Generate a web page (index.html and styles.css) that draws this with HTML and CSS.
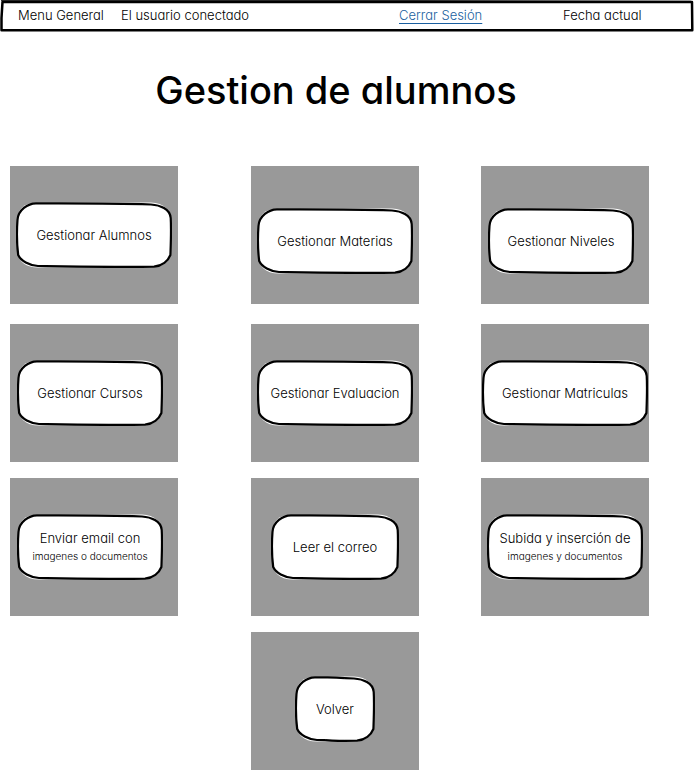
FILE: index.html
```html
<!DOCTYPE html>
<html lang="es">
<head>
<meta charset="utf-8">
<meta name="viewport" content="width=device-width, initial-scale=1">
<title>Gestion de alumnos</title>
<link rel="stylesheet" href="styles.css">
</head>
<body>
<svg class="defs" aria-hidden="true">
  <symbol id="cap-left" viewBox="0 0 30 66">
    <path class="fill" d="M30 .5H22C8 .5 1 7 1 20V46C1 58 8 65.500 22 65.500H30Z"/>
    <path class="line" d="M30 1.300H20C12 1.400 2 8 1.500 18C.6 30 .8 42 2.200 53C5 59 13 63.500 22 64L30 64.200"/>
  </symbol>
  <symbol id="cap-mid" viewBox="0 0 100 66" preserveAspectRatio="none">
    <path class="fill" d="M0 .5H100V65.500H0Z"/>
    <path class="line" d="M0 1.300C40 1.200 70 1.500 100 2.200M0 64.200C30 64.800 60 65.100 100 64.800"/>
  </symbol>
  <symbol id="cap-right" viewBox="0 0 30 66">
    <path class="fill" d="M0 .5H9C22 1 29 8 29 20V46C29 58 22 65.500 9 65.500H0Z"/>
    <path class="line" d="M0 2.200L9 2.500C18 3 28 7 28.700 16C29.400 28 28.800 42 28.400 53C26 59 20 64 12 64.700L0 64.800"/>
  </symbol>
</svg>

<header class="topbar">
  <svg class="topbar-frame" viewBox="0 0 694 32" preserveAspectRatio="none" aria-hidden="true">
    <defs>
      <linearGradient id="fade"><stop offset="0" stop-color="#333"/><stop offset=".6" stop-color="#333"/><stop offset="1" stop-color="#ccc"/></linearGradient>
    </defs>
    <rect x="1" y="0" width="690" height="1" fill="url(#fade)"/>
    <path class="line frame" d="M2.500 1.900H400L692 2L692.300 30.200H1.500L1.500 18Z"/>
  </svg>
  <span>Menu General</span>
  <span>El usuario conectado</span>
  <a href="#">Cerrar Sesión</a>
  <span>Fecha actual</span>
</header>

<main>
  <h1>Gestion de alumnos</h1>
  <div class="cards">
    <div class="card"><button class="btn wide" type="button"><span class="outline" aria-hidden="true"><svg class="cap"><use href="#cap-left"/></svg><svg class="mid"><use href="#cap-mid"/></svg><svg class="cap"><use href="#cap-right"/></svg></span><span class="label">Gestionar Alumnos</span></button></div>
    <div class="card low"><button class="btn wide" type="button"><span class="outline" aria-hidden="true"><svg class="cap"><use href="#cap-left"/></svg><svg class="mid"><use href="#cap-mid"/></svg><svg class="cap"><use href="#cap-right"/></svg></span><span class="label">Gestionar Materias</span></button></div>
    <div class="card low start"><button class="btn regular" type="button"><span class="outline" aria-hidden="true"><svg class="cap"><use href="#cap-left"/></svg><svg class="mid"><use href="#cap-mid"/></svg><svg class="cap"><use href="#cap-right"/></svg></span><span class="label">Gestionar Niveles</span></button></div>

    <div class="card start"><button class="btn regular" type="button"><span class="outline" aria-hidden="true"><svg class="cap"><use href="#cap-left"/></svg><svg class="mid"><use href="#cap-mid"/></svg><svg class="cap"><use href="#cap-right"/></svg></span><span class="label">Gestionar Cursos</span></button></div>
    <div class="card"><button class="btn wide" type="button"><span class="outline" aria-hidden="true"><svg class="cap"><use href="#cap-left"/></svg><svg class="mid"><use href="#cap-mid"/></svg><svg class="cap"><use href="#cap-right"/></svg></span><span class="label">Gestionar Evaluacion</span></button></div>
    <div class="card"><button class="btn full" type="button"><span class="outline" aria-hidden="true"><svg class="cap"><use href="#cap-left"/></svg><svg class="mid"><use href="#cap-mid"/></svg><svg class="cap"><use href="#cap-right"/></svg></span><span class="label">Gestionar Matriculas</span></button></div>

    <div class="card start"><button class="btn regular" type="button"><span class="outline" aria-hidden="true"><svg class="cap"><use href="#cap-left"/></svg><svg class="mid"><use href="#cap-mid"/></svg><svg class="cap"><use href="#cap-right"/></svg></span><span class="label">Enviar email con<small>imagenes o documentos</small></span></button></div>
    <div class="card"><button class="btn medium" type="button"><span class="outline" aria-hidden="true"><svg class="cap"><use href="#cap-left"/></svg><svg class="mid"><use href="#cap-mid"/></svg><svg class="cap"><use href="#cap-right"/></svg></span><span class="label">Leer el correo</span></button></div>
    <div class="card"><button class="btn wide" type="button"><span class="outline" aria-hidden="true"><svg class="cap"><use href="#cap-left"/></svg><svg class="mid"><use href="#cap-mid"/></svg><svg class="cap"><use href="#cap-right"/></svg></span><span class="label">Subida y inserción de<small>imagenes y documentos</small></span></button></div>

    <div class="card back"><button class="btn short" type="button"><span class="outline" aria-hidden="true"><svg class="cap"><use href="#cap-left"/></svg><svg class="mid"><use href="#cap-mid"/></svg><svg class="cap"><use href="#cap-right"/></svg></span><span class="label">Volver</span></button></div>
  </div>
</main>
</body>
</html>
```
FILE: styles.css
```css
* { box-sizing: border-box; }

body {
  margin: 0;
  background: #fff;
  color: #000;
  font-family: Inter, "Liberation Sans", sans-serif;
  font-size: 13px;
  font-weight: 300;
  line-height: 18px;
  /* single-storey "a" */
  font-feature-settings: "cv11";
}

.defs { position: absolute; width: 0; height: 0; }

.fill { fill: #fff; }
.line {
  fill: none;
  stroke: #000;
  stroke-width: 2.2;
  stroke-linejoin: round;
  vector-effect: non-scaling-stroke;
}
.frame { stroke-width: 2.5; }

.topbar {
  position: relative;
  display: grid;
  grid-template-columns: 103fr 278fr 164fr 131fr;
  align-items: center;
  height: 32px;
  padding: 0 0 2px 18px;
  white-space: nowrap;
}
.topbar-frame {
  position: absolute;
  inset: 0;
  width: 100%;
  height: 100%;
  pointer-events: none;
}
.topbar a {
  color: #1a5fa0;
  text-underline-offset: 3px;
}

h1 {
  margin: 0;
  padding: 34px 22px 52px 0;
  font-size: 38px;
  font-weight: 500;
  line-height: 48px;
  text-align: center;
  color: #000;
}

.cards {
  display: grid;
  grid-template-columns: 241fr 230fr 213fr;
  grid-template-rows: 142px auto;
  row-gap: 16px;
  align-items: start;
  padding-left: 10px;
}

.card {
  display: flex;
  justify-content: center;
  width: 168px;
  height: 138px;
  padding-top: 36px;
  background: #999;
}
.card.low { padding-top: 42px; }
.card.start { justify-content: flex-start; padding-left: 7px; }
.card.back { grid-column: 2; padding-top: 44px; }

.btn {
  position: relative;
  height: 66px;
  padding: 0;
  border: 0;
  background: none;
  color: inherit;
  font: inherit;
  font-feature-settings: inherit;
  white-space: nowrap;
  cursor: pointer;
}
.btn.short { width: 80px; }
.btn.medium { width: 128px; }
.btn.regular { width: 146px; }
.btn.wide { width: 156px; }
.btn.full { width: 166px; }

.outline {
  position: absolute;
  inset: 0;
  display: flex;
}
.outline svg { display: block; height: 66px; }
.cap { flex: none; width: 30px; }
.mid { flex: 1; min-width: 0; }

.label { position: relative; display: block; }
.label small { display: block; font-size: 10px; }
```
